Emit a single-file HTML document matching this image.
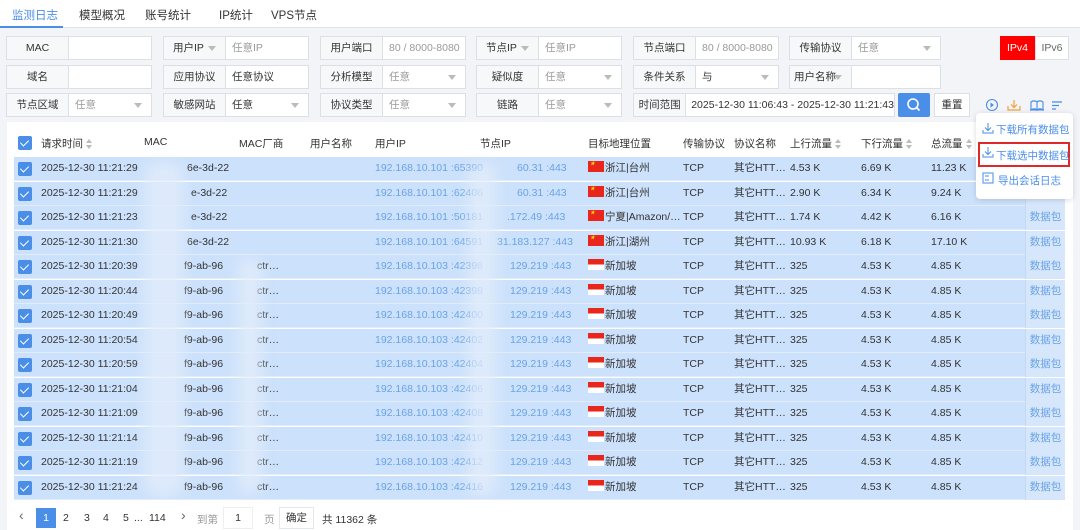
<!DOCTYPE html><html><head><meta charset="utf-8"><style>
*{box-sizing:border-box;margin:0;padding:0}
body{width:1080px;height:530px;overflow:hidden;background:#f2f4f8;font-family:"Liberation Sans","Noto Sans CJK SC",sans-serif;font-size:10.5px;color:#333;position:relative}
.tabs{position:absolute;left:0;top:0;width:1080px;height:28px;background:#fff;border-bottom:1px solid #dfe5ee}
.tab{position:absolute;top:7px;font-size:11.5px;color:#333}
.g{position:absolute;height:24px;border:1px solid #dcdfe6;background:#fff;display:flex}
.g .l{width:62px;border-right:1px solid #dcdfe6;background:#f7f8fa;text-align:center;line-height:22px;color:#333;font-size:10.5px;position:relative}
.g .v{flex:1;line-height:22px;padding-left:6px;color:#999;position:relative;font-size:10.5px;white-space:nowrap}
.dd:after{content:"";position:absolute;right:9px;top:9px;border:4px solid transparent;border-top:5px solid #bbb}
.tbl{position:absolute;left:7px;top:122px;width:1066px;height:378px;background:#fff}
.row{position:absolute;left:14px;width:1011px;height:24px;background:#cce1fb;border-bottom:1px solid #e2ecf9}
.c{position:absolute;top:0;line-height:23px;white-space:nowrap;font-size:10.5px;color:#333}
.cb{position:absolute;left:4px;top:5px;width:14px;height:14px;background:#4a8ee8;border-radius:2px}
.cb:after{content:"";position:absolute;left:4px;top:2px;width:4px;height:7px;border:solid #fff;border-width:0 1.5px 1.5px 0;transform:rotate(45deg)}
.ip{color:#6aa3e8}
.hd{position:absolute;top:136px;font-size:10.5px;color:#333}
.sort{display:inline-block;width:6px;margin-left:3px;vertical-align:middle;position:relative;height:10px}
.sort:before{content:"";position:absolute;top:0;left:0;border:3px solid transparent;border-bottom:4px solid #bbb;border-top:0}
.sort:after{content:"";position:absolute;bottom:0;left:0;border:3px solid transparent;border-top:4px solid #bbb;border-bottom:0}
.flag{display:inline-block;width:16px;height:11px;vertical-align:-1px;margin-right:1px}
.cn{background:#e8261c;position:relative}
.cn:after{content:"★";color:#ffde00;font-size:5px;position:absolute;left:2px;top:0;line-height:6px}
.sg{background:linear-gradient(#e8261c 50%,#fff 50%)}
.op{position:absolute;left:1025px;width:40px;height:24px;background:#d6e7fc;border-left:1px solid #c3d8f3;color:#6aa3e8;line-height:23px;text-align:center;z-index:2}
.blur{position:absolute;background:#e3edfb;filter:blur(6px);border-radius:14px;opacity:.75}
.pg{position:absolute;top:512px;font-size:10.5px;color:#333}
</style></head><body>
<div class="tabs">
<span class="tab" style="left:12px;color:#4a8ee8">监测日志</span>
<span class="tab" style="left:79px">模型概况</span>
<span class="tab" style="left:145px">账号统计</span>
<span class="tab" style="left:219px">IP统计</span>
<span class="tab" style="left:271px">VPS节点</span>
<div style="position:absolute;left:0;top:26px;width:63px;height:2px;background:#4a8ee8"></div>
</div>
<div class="g" style="left:6px;top:36px;width:146px"><div class="l">MAC</div><div class="v"></div></div>
<div class="g" style="left:163px;top:36px;width:146px"><div class="l dd" style="text-align:left;padding-left:9px">用户IP</div><div class="v">任意IP</div></div>
<div class="g" style="left:320px;top:36px;width:146px"><div class="l">用户端口</div><div class="v">80 / 8000-8080</div></div>
<div class="g" style="left:476px;top:36px;width:146px"><div class="l dd" style="text-align:left;padding-left:9px">节点IP</div><div class="v">任意IP</div></div>
<div class="g" style="left:633px;top:36px;width:146px"><div class="l">节点端口</div><div class="v">80 / 8000-8080</div></div>
<div class="g" style="left:789px;top:36px;width:152px"><div class="l">传输协议</div><div class="v dd">任意</div></div>
<div style="position:absolute;left:1000px;top:36px;width:35px;height:24px;background:#f00;color:#fff;line-height:24px;text-align:center">IPv4</div>
<div style="position:absolute;left:1035px;top:36px;width:34px;height:24px;background:#fff;border:1px solid #dcdfe6;color:#666;line-height:22px;text-align:center">IPv6</div>
<div class="g" style="left:6px;top:65px;width:146px"><div class="l">域名</div><div class="v"></div></div>
<div class="g" style="left:163px;top:65px;width:146px"><div class="l">应用协议</div><div class="v" style="color:#333">任意协议</div></div>
<div class="g" style="left:320px;top:65px;width:146px"><div class="l">分析模型</div><div class="v dd">任意</div></div>
<div class="g" style="left:476px;top:65px;width:146px"><div class="l">疑似度</div><div class="v dd">任意</div></div>
<div class="g" style="left:633px;top:65px;width:146px"><div class="l">条件关系</div><div class="v dd" style="color:#333">与</div></div>
<div class="g" style="left:789px;top:65px;width:152px"><div class="l dd" style="text-align:left;padding-left:4px">用户名称</div><div class="v"></div></div>
<div class="g" style="left:6px;top:93px;width:146px"><div class="l">节点区域</div><div class="v dd">任意</div></div>
<div class="g" style="left:163px;top:93px;width:146px"><div class="l">敏感网站</div><div class="v dd" style="color:#333">任意</div></div>
<div class="g" style="left:320px;top:93px;width:146px"><div class="l">协议类型</div><div class="v dd">任意</div></div>
<div class="g" style="left:476px;top:93px;width:146px"><div class="l">链路</div><div class="v dd">任意</div></div>
<div class="g" style="left:633px;top:93px;width:262px"><div class="l">时间范围</div><div class="v" style="color:#333;padding-left:5px">2025-12-30 11:06:43 - 2025-12-30 11:21:43</div></div>
<div style="position:absolute;left:898px;top:93px;width:32px;height:24px;background:#4a8ee8;border-radius:2px"><svg width="32" height="24"><circle cx="15" cy="11" r="5" fill="none" stroke="#fff" stroke-width="1.6"/><path d="M18.5 14.5l3 3" stroke="#fff" stroke-width="1.8"/></svg></div>
<div style="position:absolute;left:934px;top:93px;width:36px;height:24px;background:#fff;border:1px solid #dcdfe6;line-height:22px;text-align:center">重置</div>
<svg style="position:absolute;left:983px;top:97px" width="95" height="16">
<circle cx="9" cy="8" r="5.5" fill="none" stroke="#4a8ee8" stroke-width="1.1"/><path d="M7.5 5.5v5l3.5-2.5z" fill="#4a8ee8"/>
<path d="M31 3v7M28 7.5l3 3 3-3M25 9v4h12v-4" fill="none" stroke="#f0a23b" stroke-width="1.2"/>
<path d="M48 5c2-1.5 4-1.5 6 0v8c-2-1.5-4-1.5-6 0zM54 5c2-1.5 4-1.5 6 0v8c-2-1.5-4-1.5-6 0zM47 13h14" fill="none" stroke="#4a8ee8" stroke-width="1.1"/>
<path d="M69 5h10M69 8.5h7M69 12h4" stroke="#4a8ee8" stroke-width="1.2"/>
</svg>
<div class="tbl"></div>
<div class="cb" style="left:18px;top:136px"></div>
<span class="hd" style="left:41px">请求时间<i class="sort"></i></span>
<span class="hd" style="left:144px">MAC</span>
<span class="hd" style="left:239px">MAC厂商</span>
<span class="hd" style="left:310px">用户名称</span>
<span class="hd" style="left:375px">用户IP</span>
<span class="hd" style="left:480px">节点IP</span>
<span class="hd" style="left:588px">目标地理位置</span>
<span class="hd" style="left:683px">传输协议</span>
<span class="hd" style="left:734px">协议名称</span>
<span class="hd" style="left:790px">上行流量<i class="sort"></i></span>
<span class="hd" style="left:861px">下行流量<i class="sort"></i></span>
<span class="hd" style="left:931px">总流量<i class="sort"></i></span>
<div class="row" style="top:157px"><div class="cb"></div><span class="c" style="left:27px">2025-12-30 11:21:29</span><span class="c" style="left:173px">6e-3d-22</span><span class="c ip" style="left:361px">192.168.10.101 :65390</span><span class="c ip" style="left:503px">60.31 :443</span><span class="c" style="left:574px"><i class="flag cn"></i>浙江|台州</span><span class="c" style="left:669px">TCP</span><span class="c" style="left:720px">其它HTT…</span><span class="c" style="left:776px">4.53 K</span><span class="c" style="left:847px">6.69 K</span><span class="c" style="left:917px">11.23 K</span></div>
<div class="row" style="top:181.5px"><div class="cb"></div><span class="c" style="left:27px">2025-12-30 11:21:29</span><span class="c" style="left:177px">e-3d-22</span><span class="c ip" style="left:361px">192.168.10.101 :62406</span><span class="c ip" style="left:503px">60.31 :443</span><span class="c" style="left:574px"><i class="flag cn"></i>浙江|台州</span><span class="c" style="left:669px">TCP</span><span class="c" style="left:720px">其它HTT…</span><span class="c" style="left:776px">2.90 K</span><span class="c" style="left:847px">6.34 K</span><span class="c" style="left:917px">9.24 K</span></div>
<div class="row" style="top:206px"><div class="cb"></div><span class="c" style="left:27px">2025-12-30 11:21:23</span><span class="c" style="left:177px">e-3d-22</span><span class="c ip" style="left:361px">192.168.10.101 :50181</span><span class="c ip" style="left:493px">.172.49 :443</span><span class="c" style="left:574px"><i class="flag cn"></i>宁夏|Amazon/…</span><span class="c" style="left:669px">TCP</span><span class="c" style="left:720px">其它HTT…</span><span class="c" style="left:776px">1.74 K</span><span class="c" style="left:847px">4.42 K</span><span class="c" style="left:917px">6.16 K</span></div>
<div class="row" style="top:230.5px"><div class="cb"></div><span class="c" style="left:27px">2025-12-30 11:21:30</span><span class="c" style="left:173px">6e-3d-22</span><span class="c ip" style="left:361px">192.168.10.101 :64591</span><span class="c ip" style="left:483px">31.183.127 :443</span><span class="c" style="left:574px"><i class="flag cn"></i>浙江|湖州</span><span class="c" style="left:669px">TCP</span><span class="c" style="left:720px">其它HTT…</span><span class="c" style="left:776px">10.93 K</span><span class="c" style="left:847px">6.18 K</span><span class="c" style="left:917px">17.10 K</span></div>
<div id="rows"></div>
<script>
var t=["11:20:39","11:20:44","11:20:49","11:20:54","11:20:59","11:21:04","11:21:09","11:21:14","11:21:19","11:21:24"],p=[42396,42398,42400,42402,42404,42406,42408,42410,42412,42416],h="";
for(var i=0;i<10;i++){var y=255+i*24.5;h+='<div class="row" style="top:'+y+'px"><div class="cb"></div><span class="c" style="left:27px">2025-12-30 '+t[i]+'</span><span class="c" style="left:170px">f9-ab-96</span><span class="c" style="left:243px">ctr…</span><span class="c ip" style="left:361px">192.168.10.103 :'+p[i]+'</span><span class="c ip" style="left:496px">129.219 :443</span><span class="c" style="left:574px"><i class="flag sg"></i>新加坡</span><span class="c" style="left:669px">TCP</span><span class="c" style="left:720px">其它HTT…</span><span class="c" style="left:776px">325</span><span class="c" style="left:847px">4.53 K</span><span class="c" style="left:917px">4.85 K</span></div>';}
var o="";for(var j=0;j<14;j++){var yy=157+j*24.5;o+='<div class="op" style="top:'+yy+'px">数据包</div>';}
document.getElementById('rows').outerHTML=h+o+'<div class="blur" style="left:145px;top:162px;width:38px;height:335px"></div><div class="blur" style="left:238px;top:258px;width:24px;height:236px"></div><div class="blur" style="left:468px;top:162px;width:28px;height:335px"></div>';
</script>
<div style="position:absolute;left:976px;top:113px;width:97px;height:86px;background:#fff;border-radius:4px;box-shadow:0 1px 6px rgba(0,0,0,.15);z-index:5">
<svg style="position:absolute;left:6px;top:9px" width="12" height="70"><path d="M6 1v7M3 5.5l3 3 3-3M1 8v3h10V8" fill="none" stroke="#4a8ee8" stroke-width="1"/><path d="M6 25v7M3 29.5l3 3 3-3M1 32v3h10v-3" fill="none" stroke="#4a8ee8" stroke-width="1"/><rect x="1" y="51" width="10" height="10" fill="none" stroke="#4a8ee8"/><path d="M3 54h4M3 58h4" stroke="#4a8ee8"/></svg>
<span style="position:absolute;left:20px;top:9px;color:#4a8ee8">下载所有数据包</span>
<div style="position:absolute;left:2px;top:29px;width:92px;height:25px;border:2px solid #e0282a"></div>
<span style="position:absolute;left:20px;top:35px;color:#4a8ee8">下载选中数据包</span>
<span style="position:absolute;left:22px;top:60px;color:#4a8ee8">导出会话日志</span>
</div>
<div style="position:absolute;left:7px;top:500px;width:1066px;height:30px;background:#fff"></div>
<span class="pg" style="left:19px;font-size:14px;top:507px;color:#666">‹</span>
<div style="position:absolute;left:36px;top:508px;width:20px;height:20px;background:#4a8ee8;color:#fff;text-align:center;line-height:20px">1</div>
<span class="pg" style="left:63px">2</span><span class="pg" style="left:84px">3</span><span class="pg" style="left:103px">4</span><span class="pg" style="left:123px">5</span><span class="pg" style="left:134px">...</span><span class="pg" style="left:149px">114</span>
<span class="pg" style="left:181px;font-size:14px;top:507px;color:#666">›</span>
<span class="pg" style="left:197px;color:#999">到第</span>
<div style="position:absolute;left:223px;top:507px;width:30px;height:22px;border:1px solid #eee;text-align:center;line-height:20px;background:#fff">1</div>
<span class="pg" style="left:264px;color:#999">页</span>
<div style="position:absolute;left:279px;top:507px;width:35px;height:22px;border:1px solid #e4e7ed;text-align:center;line-height:20px">确定</div>
<span class="pg" style="left:322px">共 11362 条</span>
</body></html>
